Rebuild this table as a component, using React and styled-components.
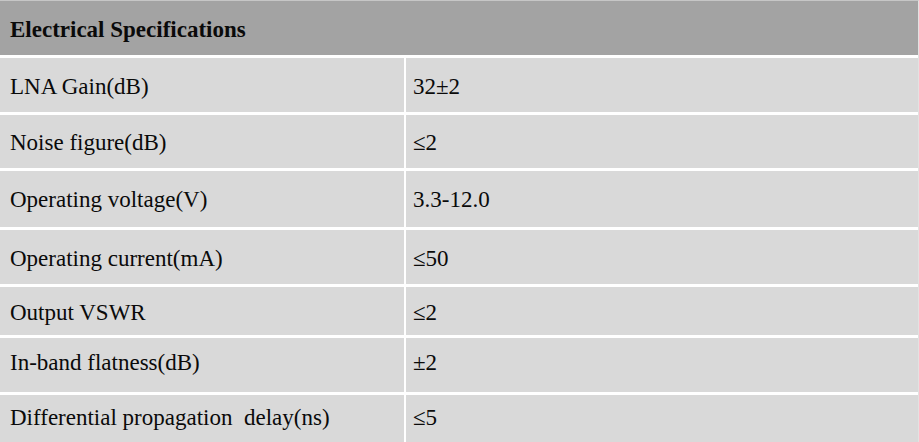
import React from 'react';
import styled, { createGlobalStyle } from 'styled-components';

const GlobalStyle = createGlobalStyle`
  html, body {
    margin: 0;
    padding: 0;
    background: #ffffff;
  }
`;

const Table = styled.div`
  width: 919px;
  height: 442px;
  overflow: hidden;
  box-sizing: border-box;
  border-top: 1px solid #c6c6c6;
  border-right: 1px solid #e2e2e2;
  display: grid;
  grid-template-columns: 404px 1fr;
  grid-template-rows: 54px 54px 53px 56px 54px 48px 54px 54px;
  column-gap: 2px;
  row-gap: 3px;
  font-family: "Liberation Serif", "Times New Roman", serif;
  font-size: 23px;
  color: #0a0a0a;
`;

const Header = styled.div`
  grid-column: 1 / span 2;
  background: #a3a3a3;
  font-weight: bold;
  padding: 16px 0 0 10px;
`;

const Cell = styled.div`
  background: #d9d9d9;
  padding-left: ${({ $value }) => ($value ? '7px' : '10px')};
  padding-top: ${({ $top }) => $top}px;
  white-space: pre;
`;

// top = offset of the text inside each row
const specs = [
  ['LNA Gain(dB)', '32±2', 16],
  ['Noise figure(dB)', '≤2', 15],
  ['Operating voltage(V)', '3.3-12.0', 16],
  ['Operating current(mA)', '≤50', 16],
  ['Output VSWR', '≤2', 13],
  ['In-band flatness(dB)', '±2', 12],
  ['Differential propagation  delay(ns)', '≤5', 10],
];

const App = () => (
  <>
    <GlobalStyle />
    <Table>
      <Header>Electrical Specifications</Header>
      {specs.map(([name, value, top]) => (
        <React.Fragment key={name}>
          <Cell $top={top}>{name}</Cell>
          <Cell $value $top={top}>{value}</Cell>
        </React.Fragment>
      ))}
    </Table>
  </>
);

export default App;
